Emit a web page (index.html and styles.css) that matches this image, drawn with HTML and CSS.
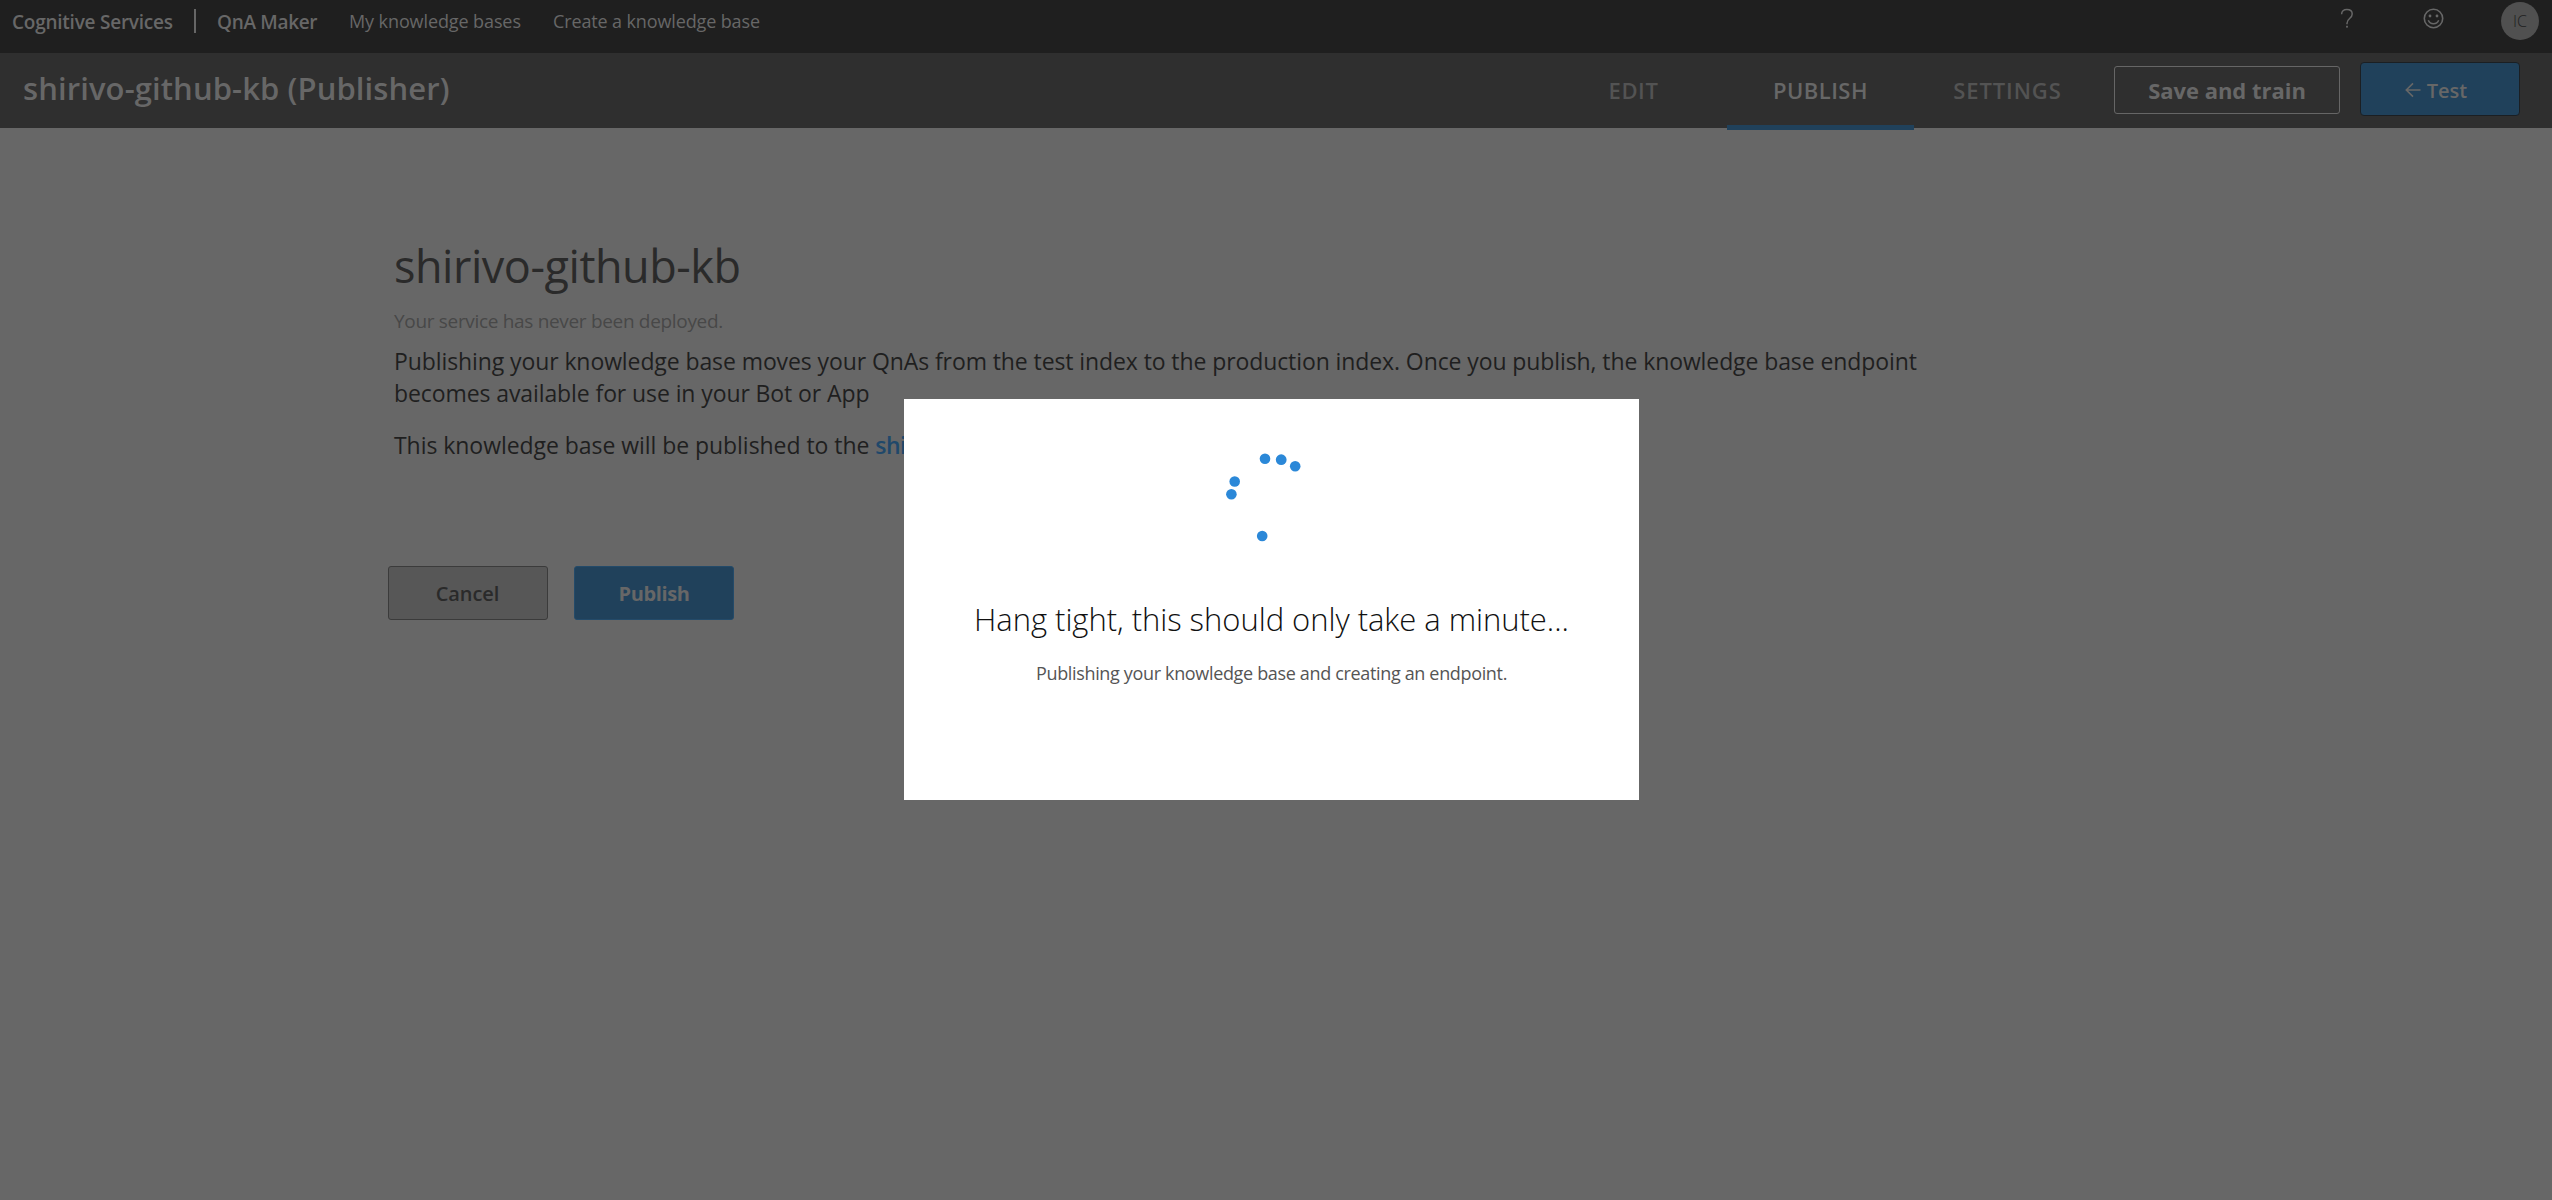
FILE: index.html
```html
<!DOCTYPE html>
<html lang="en">
<head>
<meta charset="utf-8">
<title>QnA Maker - Publish</title>
<link rel="stylesheet" href="styles.css">
</head>
<body>
<header class="topbar">
  <span class="brand">Cognitive Services</span>
  <span class="divider"></span>
  <span class="product">QnA Maker</span>
  <nav class="topnav">
    <a class="my-kbs">My knowledge bases</a>
    <a class="create-kb">Create a knowledge base</a>
  </nav>
  <div class="tools">
    <svg class="help" width="14" height="21" viewBox="0 0 14 21"><path d="M1.6 6.2C1.6 3.2 3.6 1.5 6.9 1.5s5.3 1.7 5.3 4.4c0 2.3-1.2 3.4-2.6 4.6-1.7 1.4-2.6 2.4-2.6 4.7v1" fill="none" stroke="currentColor" stroke-width="1.5"/><rect x="6.1" y="17.8" width="1.8" height="1.8" fill="currentColor"/></svg>
    <svg class="smiley" width="21" height="21" viewBox="0 0 21 21"><circle cx="10.5" cy="10.5" r="9.2" fill="none" stroke="currentColor" stroke-width="1.6"/><circle cx="7" cy="8" r="1.4" fill="currentColor"/><circle cx="14" cy="8" r="1.4" fill="currentColor"/><path d="M5.3 12.2a5.6 5.6 0 0 0 10.4 0" fill="none" stroke="currentColor" stroke-width="1.5"/></svg>
    <span class="avatar">IC</span>
  </div>
</header>
<div class="kbbar">
  <div class="kbname">shirivo-github-kb (Publisher)</div>
  <nav class="tabs">
    <a class="tab edit">EDIT</a>
    <a class="tab active">PUBLISH</a>
    <a class="tab settings">SETTINGS</a>
  </nav>
  <button class="save">Save and train</button>
  <button class="test"><svg width="16" height="16" viewBox="0 0 16 16"><path d="M15.5 8H1.3M8 1.4L1.3 8 8 14.6" fill="none" stroke="currentColor" stroke-width="1.6"/></svg><span>Test</span></button>
</div>
<main class="content">
  <h1>shirivo-github-kb</h1>
  <p class="status">Your service has never been deployed.</p>
  <p class="info">Publishing your knowledge base moves your QnAs from the test index to the production index. Once you publish, the knowledge base endpoint<br>becomes available for use in your Bot or App</p>
  <p class="target">This knowledge base will be published to the <b>shi</b></p>
  <div class="actions">
    <button class="cancel">Cancel</button>
    <button class="publish">Publish</button>
  </div>
</main>
<div class="overlay">
  <section class="dialog">
    <svg class="spinner" width="76" height="96" viewBox="0 0 76 96" fill="#2b88d8"><circle cx="39" cy="19.7" r="5.3"/><circle cx="55.2" cy="20.7" r="5.4"/><circle cx="69.2" cy="27.3" r="5.3"/><circle cx="8.7" cy="42.5" r="5.3"/><circle cx="5.4" cy="55.3" r="5.3"/><circle cx="36.2" cy="97" r="5.3"/></svg>
    <h2>Hang tight, this should only take a minute...</h2>
    <p>Publishing your knowledge base and creating an endpoint.</p>
  </section>
</div>
</body>
</html>
```
FILE: styles.css
```css
* { box-sizing: border-box; }
html, body { height: 100%; margin: 0; overflow: hidden; }
body { background: #676767; color: #1f1f1f; font-family: "Open Sans", "Noto Sans", sans-serif; }
h1, h2, p { margin: 0; font-weight: 400; white-space: nowrap; }
button { font-family: inherit; margin: 0; padding: 0; display: flex; justify-content: center; align-items: center; border-radius: 3px; }
svg { display: block; overflow: visible; }

.topbar { height: 53px; background: #1f1f1f; color: #676767; display: flex; align-items: flex-start; padding: 0 13px 0 12px; white-space: nowrap; }
.brand, .product { font-size: 19px; font-weight: 600; line-height: 45px; }
.brand { width: 182px; letter-spacing: -0.24px; }
.divider { width: 2px; height: 24px; margin-top: 9px; background: #666; }
.product { width: 132px; margin-left: 21px; letter-spacing: -0.32px; }
.topnav { display: flex; font-size: 18px; line-height: 43px; }
.my-kbs { width: 204px; letter-spacing: -0.1px; }
.create-kb { letter-spacing: -0.13px; }
.tools { display: flex; margin-left: auto; }
.help { margin: 8px 69px 0 0; }
.smiley { margin: 8px 57px 0 0; }
.avatar { width: 38px; height: 38px; margin-top: 2px; border-radius: 50%; background: #505050; color: #1f1f1f; font-size: 16px; font-weight: 300; line-height: 39px; text-align: center; }

.kbbar { height: 75px; background: #2f2f2f; color: #676767; display: flex; align-items: flex-start; padding: 0 32px 0 23px; white-space: nowrap; }
.kbname { font-size: 31px; font-weight: 600; line-height: 71px; letter-spacing: 0.1px; }
.tabs { display: flex; margin-left: auto; height: 75px; font-size: 22px; font-weight: 600; line-height: 75px; color: #535353; }
.tab { width: 187px; text-align: center; letter-spacing: 0.6px; }
.tab.active { color: #676767; position: relative; letter-spacing: 0.45px; }
.tab.active::after { content: ""; position: absolute; left: 0; bottom: -2px; width: 187px; height: 5px; background: #20415b; }
.settings { letter-spacing: 0.9px; }
.save { width: 226px; height: 48px; margin: 13px 20px 0 13px; border: 1px solid #666; background: none; color: #676767; font-size: 22px; font-weight: 700; letter-spacing: -0.02px; }
.test { width: 160px; height: 54px; margin-top: 9px; border: 1px solid #1b1f23; border-radius: 4px; background: #20415b; color: #676767; font-size: 20px; font-weight: 600; gap: 6px; padding: 2px 8px 0 0; }

.content { padding: 107px 0 0 394px; }
h1 { font-size: 45px; line-height: 61px; letter-spacing: -0.46px; color: #2a2a2a; }
.status { margin-top: 10px; font-size: 19px; line-height: 30px; font-weight: 400; letter-spacing: -0.32px; color: #484848; }
.info { margin-top: 9px; }
.target { margin-top: 20px; }
.info, .target { font-size: 23px; line-height: 32px; letter-spacing: -0.095px; }
.target { letter-spacing: -0.05px; }
.target b { color: #20486a; font-weight: 600; letter-spacing: -0.5px; }
.actions { display: flex; gap: 26px; margin: 105px 0 0 -6px; }
.actions button { width: 160px; height: 54px; font-size: 20px; font-weight: 600; }
.actions .cancel { border: 1px solid #3b3b3b; background: #575757; color: #2a2a2a; letter-spacing: -0.1px; padding-right: 1px; }
.actions .publish { border: 1px solid #234a69; background: #20415b; color: #676767; font-weight: 700; letter-spacing: -0.4px; }

.overlay { position: absolute; inset: 0; display: flex; align-items: center; justify-content: center; padding: 0 9px 1px 0; }
.dialog { width: 735px; height: 401px; background: #fff; display: flex; flex-direction: column; align-items: center; padding-top: 40px; }
.spinner { margin-right: 16px; }
h2 { margin-top: 62px; font-size: 31px; line-height: 44px; font-weight: 300; letter-spacing: -0.04px; color: #111; }
.dialog p { margin-top: 19px; font-size: 18px; line-height: 26px; letter-spacing: -0.34px; color: #555; }
```
